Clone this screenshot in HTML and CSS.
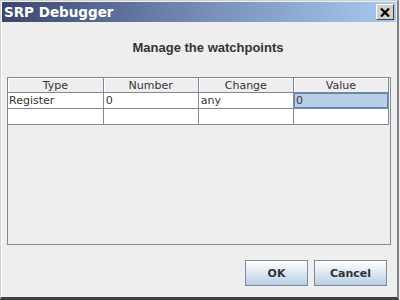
FILE: index.html
```html
<!DOCTYPE html>
<html lang="en">
<head>
    <meta charset="UTF-8">
    <title>SRP Debugger</title>
    <link rel="stylesheet" href="styles.css">
</head>
<body>
    <div class="window">
        <div class="titlebar">
            <span class="title">SRP Debugger</span>
            <span class="close">
                <svg width="10" height="9" viewBox="0 0 10 9">
                    <path d="M1 0.5 L9 8.5 M9 0.5 L1 8.5" stroke="#000000" stroke-width="2.2" fill="none"/>
                </svg>
            </span>
        </div>
        <div class="content">
            <h3 class="heading">Manage the watchpoints</h3>
            <div class="scroll">
                <table class="grid">
                    <thead>
                        <tr>
                            <th>Type</th>
                            <th>Number</th>
                            <th>Change</th>
                            <th>Value</th>
                        </tr>
                    </thead>
                    <tbody>
                        <tr>
                            <td>Register</td>
                            <td>0</td>
                            <td>any</td>
                            <td class="selected">0</td>
                        </tr>
                        <tr>
                            <td></td>
                            <td></td>
                            <td></td>
                            <td></td>
                        </tr>
                    </tbody>
                </table>
            </div>
            <div class="buttons">
                <button class="ok">OK</button>
                <button class="cancel">Cancel</button>
            </div>
        </div>
    </div>
</body>
</html>
```

FILE: styles.css
```css
body {
    margin: 0;
    background-color: #eeeeee;
    font-family: "DejaVu Sans", sans-serif;
}

.window {
    width: 396px;
    height: 296px;
    display: flex;
    flex-direction: column;
    border-top: 1px solid #d4d0c8;
    border-left: 1px solid #d4d0c8;
    border-right: 2px solid #808080;
    border-bottom: 3px solid #404040;
    box-shadow: inset 1px 0 0 #ffffff;
    background-color: #eeeeee;
}

.titlebar {
    height: 20px;
    margin: 1px 1px 0 1px;
    display: flex;
    align-items: center;
    justify-content: space-between;
    background: linear-gradient(to right, #3a4670, #7a92bc 55%, #a6caf0);
}

.title {
    color: #ffffff;
    font-weight: bold;
    font-size: 13.5px;
    padding-left: 2px;
}

.close {
    width: 16px;
    height: 14px;
    margin-right: 2px;
    display: flex;
    align-items: center;
    justify-content: center;
    background-color: #d4d0c8;
    border: 1px solid;
    border-color: #ffffff #404040 #404040 #ffffff;
}

.content {
    flex: 1;
    display: flex;
    flex-direction: column;
    padding: 0 6px 0 6px;
}

.heading {
    margin: 18px 0 0 0;
    padding-left: 18px;
    height: 18px;
    text-align: center;
    font-family: "Liberation Sans", Arial, sans-serif;
    font-size: 13px;
    font-weight: bold;
    color: #333333;
}

.scroll {
    margin-top: 19px;
    height: 166px;
    border: 1px solid #7a8a99;
    background-color: #eeeeee;
    padding-right: 1px;
}

.grid {
    width: 381px;
    border-collapse: collapse;
    table-layout: fixed;
    font-size: 11px;
    font-family: "DejaVu Sans", sans-serif;
}

.grid th {
    height: 14px;
    padding: 0;
    font-weight: normal;
    color: #333333;
    background-color: #eeeeee;
    border-right: 1px solid #7a8a99;
    border-bottom: 1px solid #7a8a99;
    box-shadow: inset 1px 1px 0 #ffffff;
}

.grid td {
    height: 15px;
    padding: 0 0 0 2px;
    background-color: #ffffff;
    color: #333333;
    border: 1px solid #7a8a99;
    border-top: none;
    border-left: none;
}

.grid td:first-child {
    padding-left: 1px;
}

.grid td.selected {
    background-color: #b8cfe5;
    box-shadow: inset 0 0 0 1px #6382bf;
}

.buttons {
    display: flex;
    justify-content: flex-end;
    gap: 6px;
    margin-top: 15px;
    padding-right: 4px;
}

.buttons button {
    height: 26px;
    border: 1px solid #7a8a99;
    background: linear-gradient(to bottom, #ffffff, #b8cfe5);
    font-family: "DejaVu Sans", sans-serif;
    font-weight: bold;
    font-size: 11px;
    color: #333333;
    padding: 0;
}

.ok {
    width: 63px;
}

.cancel {
    width: 73px;
}
```
